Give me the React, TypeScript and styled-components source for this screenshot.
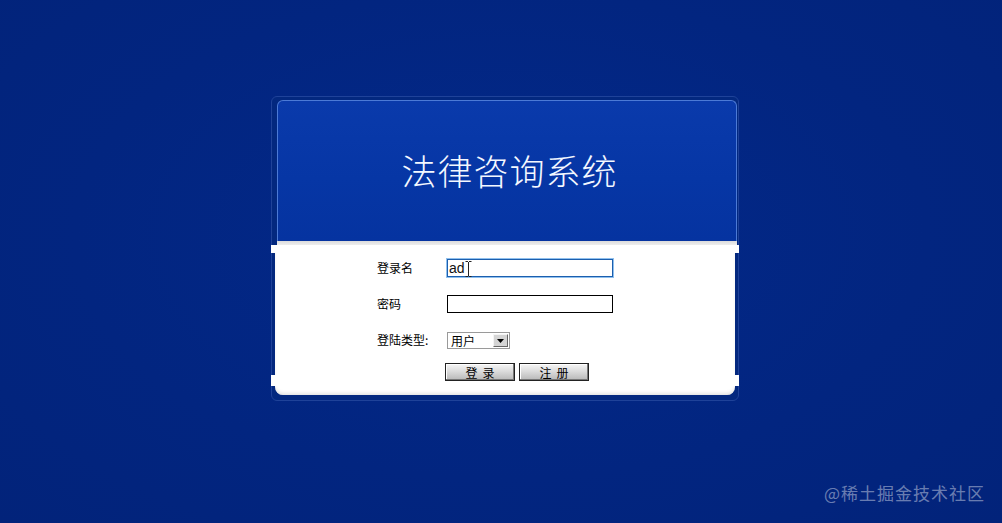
import React, { FC } from 'react';
import styled, { createGlobalStyle } from 'styled-components';

const GlobalStyle = createGlobalStyle`
    html, body {
        margin: 0;
        padding: 0;
        height: 100%;
        background: #022580;
        font-family: "Noto Sans CJK SC", "Liberation Sans", sans-serif;
    }
    #root {
        min-height: 100%;
    }
`;

const Page = styled.div`
    position: relative;
    height: 523px;
    padding: 96px 0 0 271px;
    box-sizing: border-box;
    background: radial-gradient(ellipse at 50% 45%, #03298a 0%, #022580 60%, #02237a 100%);
`;

const Frame = styled.div`
    box-sizing: border-box;
    width: 468px;
    height: 305px;
    padding: 3px 1px 5px 5px;
    border: 1px solid #1f4299;
    border-radius: 6px;
    background: #03287f;
`;

const Header = styled.div`
    box-sizing: border-box;
    height: 141px;
    display: flex;
    align-items: center;
    justify-content: center;
    border: 1px solid #4c7ad6;
    border-bottom: none;
    border-radius: 6px 6px 0 0;
    background: linear-gradient(180deg, #0a3aab 0%, #0636a5 55%, #0533a0 100%);
`;

const Title = styled.h1`
    margin: 0 0 4px 5px;
    color: #f4f8ff;
    font-family: "Noto Sans CJK SC", sans-serif;
    font-weight: 300;
    font-size: 35px;
    letter-spacing: 1px;
`;

const Separator = styled.div`
    height: 4px;
    background: linear-gradient(180deg, #dcdcdc, #eeeeee);
`;

const Body = styled.div`
    position: relative;
    box-sizing: border-box;
    height: 150px;
    margin: 0 2px 0 -2px;
    padding: 14px 0 0 102px;
    background: #fff;
    border-radius: 0 0 8px 8px;
    box-shadow: inset 0 -3px 4px -2px #d8d8d8;

    /* white tabs that stick out past the frame edge */
    &::before,
    &::after {
        content: '';
        position: absolute;
        left: -4px;
        right: -4px;
        background: #fff;
    }

    &::before {
        top: 0;
        height: 8px;
    }

    &::after {
        top: 130px;
        height: 11px;
    }
`;

const Form = styled.div`
    position: relative;
    z-index: 1;
    display: grid;
    grid-template-columns: 70px auto;
    grid-template-rows: 18px 18px 17px 18px;
    row-gap: 18px;
    align-items: start;
`;

const Label = styled.span`
    font-size: 12px;
    color: #000;
    line-height: 18px;
`;

const InputBox = styled.div`
    position: relative;
    width: 166px;
    height: 18px;
`;

const TextInput = styled.input<{ $focused?: boolean }>`
    display: block;
    box-sizing: border-box;
    width: 166px;
    height: 18px;
    margin: 0;
    padding: 0 1px;
    font-family: "Liberation Sans", sans-serif;
    font-size: 14px;
    color: #111;
    background: #fff;
    border: 1px solid ${p => (p.$focused ? '#1c5fae' : '#000')};
    box-shadow: ${p => (p.$focused ? '0 0 0 1px #8fc0ee' : 'none')};
    outline: none;
`;

const Caret = styled.svg`
    position: absolute;
    left: 18px;
    top: 2px;
`;

const Select = styled.div`
    box-sizing: border-box;
    display: flex;
    width: 63px;
    height: 17px;
    margin-top: 1px;
    border: 1px solid #9a9a9a;
    background: #fff;
`;

const SelectText = styled.span`
    flex: 1;
    padding-left: 3px;
    font-size: 12px;
    line-height: 15px;
    color: #000;
`;

const SelectArrow = styled.span`
    box-sizing: border-box;
    display: flex;
    align-items: center;
    justify-content: center;
    width: 15px;
    margin: 1px;
    background: #d4d4d4;
    border: 1px solid;
    border-color: #f4f4f4 #666 #666 #f4f4f4;
`;

const Buttons = styled.div`
    display: flex;
    gap: 4px;
    margin: -3px 0 0 -2px;
`;

const Button = styled.button`
    box-sizing: border-box;
    width: 70px;
    height: 18px;
    padding: 0;
    font-family: "Noto Sans CJK SC", sans-serif;
    font-size: 12px;
    line-height: 15px;
    letter-spacing: 5px;
    text-indent: 5px;
    color: #000;
    border: 1px solid #222;
    background: linear-gradient(180deg, #f6f6f6 0%, #dcdcdc 45%, #b8b8b8 100%);
    box-shadow: inset -1px -1px 0 #777, inset 1px 1px 0 #fff;
`;

const Watermark = styled.div`
    position: absolute;
    right: 17px;
    bottom: 18px;
    font-size: 17px;
    color: rgba(255, 255, 255, 0.42);
    letter-spacing: 1px;
`;

const App: FC = () => (
    <>
        <GlobalStyle />
        <Page>
            <Frame>
                <Header>
                    <Title>法律咨询系统</Title>
                </Header>
                <Separator />
                <Body>
                    <Form>
                        <Label>登录名</Label>
                        <InputBox>
                            <TextInput $focused defaultValue="ad" />
                            <Caret width="7" height="16" viewBox="0 0 7 16">
                                <path d="M0.5 0.5h2.5M4 0.5h2.5M3.5 1v14M0.5 15.5h2.5M4 15.5h2.5" stroke="#222" strokeWidth="1" fill="none" />
                            </Caret>
                        </InputBox>
                        <Label>密码</Label>
                        <TextInput type="password" />
                        <Label>登陆类型:</Label>
                        <Select>
                            <SelectText>用户</SelectText>
                            <SelectArrow>
                                <svg width="7" height="4" viewBox="0 0 7 4">
                                    <path d="M0 0h7L3.5 4z" fill="#000" />
                                </svg>
                            </SelectArrow>
                        </Select>
                        <span />
                        <Buttons>
                            <Button>登录</Button>
                            <Button>注册</Button>
                        </Buttons>
                    </Form>
                </Body>
            </Frame>
            <Watermark>@稀土掘金技术社区</Watermark>
        </Page>
    </>
);

export default App;
